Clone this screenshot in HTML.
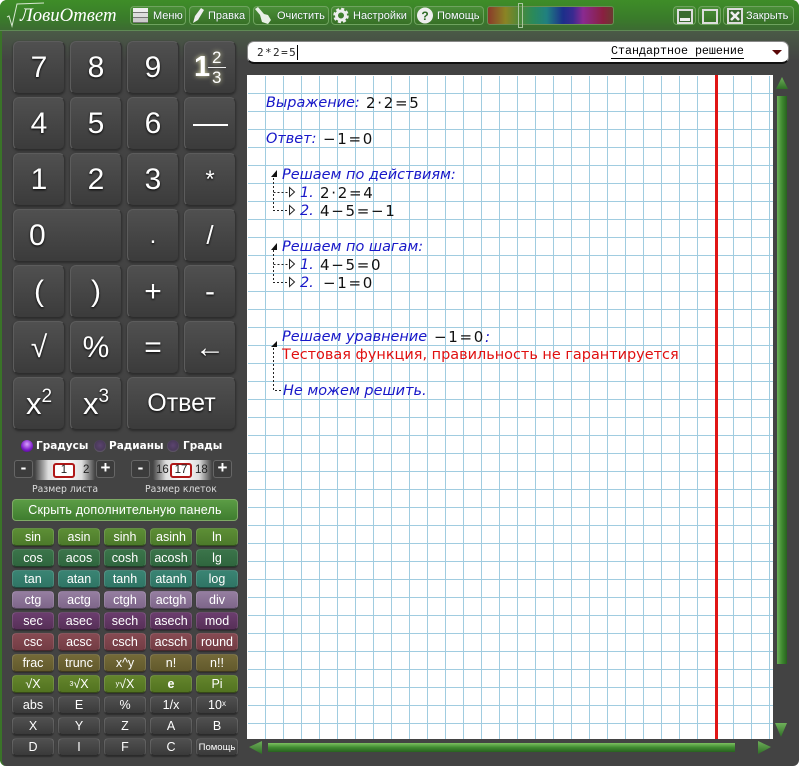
<!DOCTYPE html>
<html><head><meta charset="utf-8"><style>
*{box-sizing:border-box}
html,body{margin:0;padding:0;background:#fff;width:800px;height:767px;overflow:hidden;font-family:"Liberation Sans",sans-serif}
#win{position:absolute;left:0;top:0;width:799px;height:766px;background:#434343;border-radius:7px 7px 6px 6px;border-left:2px solid #3a7428;overflow:hidden}
#wrap{position:absolute;left:0;top:0;width:800px;height:767px}
.a{position:absolute}
#top{position:absolute;left:0;top:0;width:799px;height:31px;background:linear-gradient(#3e8d28,#3a7c2a 60%,#3c6b32);border-bottom:1px solid #5f8a55;border-radius:7px 7px 0 0}
#shade{position:absolute;left:2px;top:31px;width:797px;height:30px;background:linear-gradient(#4a5a46,#434343)}
.tb{position:absolute;top:6px;height:19px;border:1px solid #6fa35f;border-radius:4px;background:linear-gradient(#4a8f38,#377026);color:#fff;font-size:11px;line-height:18px;white-space:nowrap;text-shadow:0 0 1px #143}
.tb span{position:absolute;top:0}
.k{position:absolute;width:52px;height:53px;background:linear-gradient(#505050,#3b3b3b);border:1px solid #5c5c5c;border-bottom-color:#2d2d2d;border-right-color:#333;border-radius:6px;box-shadow:0 1px 2px #2a2a2a;color:#fff;text-align:center;font-size:30px;line-height:51px;text-shadow:0 1px 2px #000}
.s{position:absolute;width:42px;height:18px;border-radius:4px;color:#fff;text-align:center;font-size:12.5px;line-height:17px;border:1px solid rgba(255,255,255,.13);border-bottom-color:rgba(0,0,0,.45);box-shadow:0 1px 1px #2d2d2d}
.g1{background:linear-gradient(#5d8e35,#4c7a2b)}.g2{background:linear-gradient(#3b744a,#2f663e)}.g3{background:linear-gradient(#3a8473,#2f7565)}.g4{background:linear-gradient(#957ea0,#7e668a)}.g5{background:linear-gradient(#6b3d6e,#573058)}.g6{background:linear-gradient(#864a52,#733c44)}.g7{background:linear-gradient(#746a38,#62592c)}.g8{background:linear-gradient(#64852c,#527320)}.g9{background:linear-gradient(#505050,#3a3a3a)}
.r1{top:528px}.r2{top:549px}.r3{top:570px}.r4{top:591px}.r5{top:612px}.r6{top:633px}.r7{top:654px}.r8{top:675px}.r9{top:696px}.r10{top:717px}.r11{top:738px}
.c1{left:12px}.c2{left:58px}.c3{left:104px}.c4{left:150px}.c5{left:196px}
.q{position:absolute;width:19px;height:18px;background:#3c3c3c;border:1px solid #666;border-radius:3px;color:#fff;font-weight:bold;font-size:17px;line-height:14px;text-align:center}
.lab{position:absolute;color:#ddd;font-size:9.3px;white-space:nowrap;font-family:"DejaVu Sans",sans-serif}
.t{position:absolute;white-space:nowrap;font-family:"DejaVu Sans",sans-serif;font-size:14.45px;line-height:18px;color:#1717c8;font-style:italic}
.m{position:absolute;white-space:nowrap;font-family:"DejaVu Sans",sans-serif;font-size:15px;line-height:18px;color:#111;font-weight:normal;font-style:normal;letter-spacing:1.7px}
.rad{position:absolute;width:12px;height:12px;border-radius:50%;top:440px;background:radial-gradient(circle at 50% 45%,#5c4470,#4a3a5a 55%,#7a7a7a 90%)}
.dl{position:absolute;color:#fff;font-weight:bold;font-size:10.5px;top:440px;white-space:nowrap;font-family:"DejaVu Sans",sans-serif}
svg{position:absolute;left:0;top:0}
</style></head><body>
<div id="wrap">
<div id="win"></div>
<div id="top"></div>
<div id="shade"></div>
<div class="a" style="left:0;top:31px;width:2px;height:730px;background:#3a7428"></div>

<div class="a" style="left:20px;top:4px;color:#fff;font-family:'Liberation Serif',serif;font-style:italic;font-size:18.8px;line-height:24px;white-space:nowrap">ЛовиОтвет</div>

<div class="tb" style="left:130px;width:56px"><span style="left:22px">Меню</span></div>
<div class="tb" style="left:189px;width:61px"><span style="left:18px">Правка</span></div>
<div class="tb" style="left:253px;width:76px"><span style="left:23px">Очистить</span></div>
<div class="tb" style="left:331px;width:81px"><span style="left:21px">Настройки</span></div>
<div class="tb" style="left:414px;width:70px"><span style="left:22px">Помощь</span></div>
<div class="a" style="left:487px;top:6px;width:127px;height:19px;border-radius:3px;border:1px solid #6a8f55;background:linear-gradient(90deg,#8a3a2a 0%,#8a8424 14%,#4a8a3a 26%,#2a8a5a 36%,#208080 47%,#1c2f8a 60%,#3a2a90 68%,#8a2a90 76%,#8a2040 92%,#6a3a30 100%)"></div>
<div class="a" style="left:518px;top:3px;width:5px;height:25px;border:1px solid #a9c69f"></div>
<div class="tb" style="left:673px;width:23px"></div>
<div class="tb" style="left:698px;width:23px"></div>
<div class="tb" style="left:723px;width:71px"><span style="left:22px">Закрыть</span></div>

<svg width="800" height="767">
<path d="M7 17 L9 16 L12 26 L17 4 L44 3" fill="none" stroke="#d7e8d0" stroke-width="1"/>
<rect x="133" y="8" width="15" height="15" fill="#777"/><rect x="133" y="8" width="15" height="4" fill="#eee"/><rect x="133" y="13" width="15" height="4" fill="#ddd"/><rect x="133" y="18" width="15" height="4" fill="#ccc"/>
<path d="M193 23 L195 16 L201 8 L204 10 L198 20 Z" fill="#eee"/>
<path d="M255 9 L258 7 L264 14 L268 15 L271 20 L268 24 L262 22 L260 15 Z" fill="#e8efe6"/>
<circle cx="341" cy="15.5" r="4.5" fill="none" stroke="#eee" stroke-width="3"/><circle cx="341" cy="15.5" r="6.5" fill="none" stroke="#eee" stroke-width="2.5" stroke-dasharray="3 2.1"/>
<circle cx="425" cy="15.5" r="8" fill="#eee"/><text x="425" y="20" text-anchor="middle" font-family="Liberation Sans" font-weight="bold" font-size="12" fill="#2d6a25">?</text>
<rect x="678" y="10" width="14" height="13" fill="#3a6a30" stroke="#ddd" stroke-width="2"/><rect x="680" y="18" width="10" height="3" fill="#eee"/>
<rect x="703" y="10" width="14" height="13" fill="none" stroke="#ddd" stroke-width="2"/>
<rect x="728" y="9" width="14" height="14" fill="#3a6a30" stroke="#ddd" stroke-width="2"/><path d="M731 12 L739 20 M739 12 L731 20" stroke="#eee" stroke-width="2.5"/>
</svg>

<div class="k" style="left:13px;top:41px">7</div><div class="k" style="left:70px;top:41px">8</div><div class="k" style="left:127px;top:41px">9</div>
<div class="k" style="left:184px;top:41px;text-shadow:0 0 5px #e8e8b0"><span class="a" style="left:9px;top:0;font-weight:bold;font-size:29px">1</span><span class="a" style="left:27px;top:-10px;font-size:17px">2</span><span class="a" style="left:27px;top:10px;font-size:17px">3</span><span class="a" style="left:23px;top:25px;width:18px;height:1px;background:#eee"></span></div>
<div class="k" style="left:13px;top:97px">4</div><div class="k" style="left:70px;top:97px">5</div><div class="k" style="left:127px;top:97px">6</div>
<div class="k" style="left:184px;top:97px"><span class="a" style="left:8px;top:26px;width:35px;height:2px;background:#fff"></span></div>
<div class="k" style="left:13px;top:153px">1</div><div class="k" style="left:70px;top:153px">2</div><div class="k" style="left:127px;top:153px">3</div><div class="k" style="left:184px;top:153px;font-size:24px">*</div>
<div class="k" style="left:13px;top:209px;width:109px;text-align:left;padding-left:15px">0</div><div class="k" style="left:127px;top:209px;font-size:24px">.</div><div class="k" style="left:184px;top:209px;font-size:26px">/</div>
<div class="k" style="left:13px;top:265px">(</div><div class="k" style="left:70px;top:265px">)</div><div class="k" style="left:127px;top:265px">+</div><div class="k" style="left:184px;top:265px">-</div>
<div class="k" style="left:13px;top:321px">√</div><div class="k" style="left:70px;top:321px">%</div><div class="k" style="left:127px;top:321px">=</div><div class="k" style="left:184px;top:321px">←</div>
<div class="k" style="left:13px;top:377px;font-size:31px">x<sup style="font-size:19px;position:relative;line-height:0;vertical-align:baseline;top:-12px">2</sup></div>
<div class="k" style="left:70px;top:377px;font-size:31px">x<sup style="font-size:19px;position:relative;line-height:0;vertical-align:baseline;top:-12px">3</sup></div>
<div class="k" style="left:127px;top:377px;width:109px;font-size:25px">Ответ</div>

<div class="rad" style="left:21px;background:radial-gradient(circle at 50% 35%,#d9a0ff,#7a18c8 60%,#3a1060)"></div><div class="dl" style="left:36px">Градусы</div>
<div class="rad" style="left:94px"></div><div class="dl" style="left:109px">Радианы</div>
<div class="rad" style="left:167px"></div><div class="dl" style="left:183px">Грады</div>

<div class="q" style="left:14px;top:460px">-</div>
<div class="a" style="left:35px;top:460px;width:60px;height:20px;background:linear-gradient(90deg,#444,#ddd 22%,#fff 50%,#ddd 78%,#444);border-radius:2px"></div>
<div class="a" style="left:53px;top:463px;width:22px;height:15px;background:#fff;border:2px solid #b01818;border-radius:3px;color:#222;font-size:11.5px;line-height:11px;text-align:center">1</div>
<div class="a" style="left:83px;top:464px;color:#222;font-size:11.5px">2</div>
<div class="q" style="left:96px;top:460px">+</div>
<div class="lab" style="left:32px;top:484px">Размер листа</div>

<div class="q" style="left:131px;top:460px">-</div>
<div class="a" style="left:153px;top:460px;width:59px;height:20px;background:linear-gradient(90deg,#444,#ddd 22%,#fff 50%,#ddd 78%,#444);border-radius:2px"></div>
<div class="a" style="left:156px;top:464px;color:#222;font-size:11.5px">16</div>
<div class="a" style="left:170px;top:463px;width:22px;height:15px;background:#fff;border:2px solid #b01818;border-radius:3px;color:#222;font-size:11.5px;line-height:11px;text-align:center">17</div>
<div class="a" style="left:195px;top:464px;color:#222;font-size:11.5px">18</div>
<div class="q" style="left:213px;top:460px">+</div>
<div class="lab" style="left:145px;top:484px">Размер клеток</div>

<div class="a" style="left:12px;top:499px;width:226px;height:22px;border-radius:4px;border:1px solid #7eaa66;background:linear-gradient(#5b9c45,#3f7d2f);color:#fff;font-size:12.5px;line-height:20px;text-align:center;letter-spacing:.2px">Скрыть дополнительную панель</div>

<div class="s g1 r1 c1">sin</div><div class="s g1 r1 c2">asin</div><div class="s g1 r1 c3">sinh</div><div class="s g1 r1 c4">asinh</div><div class="s g1 r1 c5">ln</div>
<div class="s g2 r2 c1">cos</div><div class="s g2 r2 c2">acos</div><div class="s g2 r2 c3">cosh</div><div class="s g2 r2 c4">acosh</div><div class="s g2 r2 c5">lg</div>
<div class="s g3 r3 c1">tan</div><div class="s g3 r3 c2">atan</div><div class="s g3 r3 c3">tanh</div><div class="s g3 r3 c4">atanh</div><div class="s g3 r3 c5">log</div>
<div class="s g4 r4 c1">ctg</div><div class="s g4 r4 c2">actg</div><div class="s g4 r4 c3">ctgh</div><div class="s g4 r4 c4">actgh</div><div class="s g4 r4 c5">div</div>
<div class="s g5 r5 c1">sec</div><div class="s g5 r5 c2">asec</div><div class="s g5 r5 c3">sech</div><div class="s g5 r5 c4">asech</div><div class="s g5 r5 c5">mod</div>
<div class="s g6 r6 c1">csc</div><div class="s g6 r6 c2">acsc</div><div class="s g6 r6 c3">csch</div><div class="s g6 r6 c4">acsch</div><div class="s g6 r6 c5">round</div>
<div class="s g7 r7 c1">frac</div><div class="s g7 r7 c2">trunc</div><div class="s g7 r7 c3">x^y</div><div class="s g7 r7 c4">n!</div><div class="s g7 r7 c5">n!!</div>
<div class="s g8 r8 c1">√X</div><div class="s g8 r8 c2"><span style="font-size:7px;position:relative;top:-2px">3</span>√X</div><div class="s g8 r8 c3"><span style="font-size:7px;position:relative;top:-2px">y</span>√X</div><div class="s g8 r8 c4" style="font-weight:bold">e</div><div class="s g8 r8 c5">Pi</div>
<div class="s g9 r9 c1">abs</div><div class="s g9 r9 c2">E</div><div class="s g9 r9 c3">%</div><div class="s g9 r9 c4">1/x</div><div class="s g9 r9 c5">10<span style="font-size:8px;position:relative;top:-3px">x</span></div>
<div class="s g9 r10 c1">X</div><div class="s g9 r10 c2">Y</div><div class="s g9 r10 c3">Z</div><div class="s g9 r10 c4">A</div><div class="s g9 r10 c5">B</div>
<div class="s g9 r11 c1">D</div><div class="s g9 r11 c2">I</div><div class="s g9 r11 c3">F</div><div class="s g9 r11 c4">C</div><div class="s g9 r11 c5" style="font-size:9.5px">Помощь</div>

<div class="a" style="left:247px;top:41px;width:542px;height:23px;background:#fff;border-radius:7px;border:1px solid #888;border-bottom:2px solid #111"></div>
<div class="a" style="left:257px;top:45px;font-family:'DejaVu Sans Mono',monospace;font-size:11px;letter-spacing:1.4px;line-height:15px;color:#222">2*2=5</div>
<div class="a" style="left:297px;top:45px;width:1px;height:15px;background:#000"></div>
<div class="a" style="left:611px;top:45px;font-family:'Liberation Mono',monospace;font-size:11.67px;line-height:13px;color:#000;border-bottom:1px solid #000;white-space:nowrap">Стандартное решение</div>
<div class="a" style="left:772px;top:50px;width:0;height:0;border-left:5px solid transparent;border-right:5px solid transparent;border-top:5px solid #5a0808"></div>

<div class="a" style="left:247px;top:75px;width:526px;height:664px;background-color:#fff;background-image:linear-gradient(90deg,transparent 17px,#a0cce0 17px),linear-gradient(transparent 17px,#a0cce0 17px);background-size:18px 18px;background-origin:padding-box;background-clip:padding-box;border-left:1px solid #fff;border-top:1px solid #fff"></div>
<div class="a" style="left:715px;top:75px;width:3px;height:664px;background:#e01515"></div>

<svg width="800" height="767">
<defs>
<linearGradient id="ga" x1="0" y1="0" x2="0" y2="1"><stop offset="0" stop-color="#6fb05a"/><stop offset="1" stop-color="#2f6f26"/></linearGradient>
</defs>
<path d="M782 77 L776 89 L788 89 Z" fill="url(#ga)"/>
<path d="M775 723 L787 723 L781 737 Z" fill="url(#ga)"/>
<path d="M249 747 L262 741 L262 754 Z" fill="url(#ga)"/>
<path d="M758 741 L771 747 L758 754 Z" fill="url(#ga)"/>
<g fill="none" stroke="#222" stroke-dasharray="2 2">
<path d="M273.5 178 V210.5 H288"/><path d="M273.5 192.5 H288"/>
<path d="M273.5 250 V282.5 H288"/><path d="M273.5 264.5 H288"/>
<path d="M273.5 348 V390.5 H283"/>
</g>
<g fill="#111"><path d="M271 177 L277 170 V177 Z"/><path d="M271 250 L277 243 V250 Z"/><path d="M271 347 L277 341 V347 Z"/></g>
<g fill="#fff" stroke="#222"><path d="M289.5 187.5 L294.5 192 L289.5 196.5 Z"/><path d="M289.5 205.5 L294.5 210 L289.5 214.5 Z"/><path d="M289.5 259.5 L294.5 264 L289.5 268.5 Z"/><path d="M289.5 277.5 L294.5 282 L289.5 286.5 Z"/></g>
</svg>
<div class="a" style="left:777px;top:96px;width:10px;height:568px;background:linear-gradient(90deg,#6fb05a,#3f8a30 50%,#28621f);"></div>
<div class="a" style="left:268px;top:743px;width:467px;height:9px;background:linear-gradient(#7cc060,#3f8a30 50%,#28621f)"></div>

<div class="t" style="left:266px;top:94px">Выражение:</div><div class="m" style="left:366px;top:94px">2·2=5</div>
<div class="t" style="left:266px;top:130px">Ответ:</div><div class="m" style="left:323px;top:130px">−1=0</div>
<div class="t" style="left:282px;top:166px">Решаем по действиям:</div>
<div class="t" style="left:300px;top:184px">1.</div><div class="m" style="left:320px;top:184px">2·2=4</div>
<div class="t" style="left:300px;top:202px">2.</div><div class="m" style="left:320px;top:202px">4−5=−1</div>
<div class="t" style="left:282px;top:238px">Решаем по шагам:</div>
<div class="t" style="left:300px;top:256px">1.</div><div class="m" style="left:320px;top:256px">4−5=0</div>
<div class="t" style="left:300px;top:274px">2.</div><div class="m" style="left:323px;top:274px">−1=0</div>
<div class="t" style="left:282px;top:328px">Решаем уравнение</div><div class="m" style="left:434px;top:328px">−1=0<span style="color:#1717c8;font-style:italic">:</span></div>
<div class="t" style="left:282px;top:346px;color:#e01010;font-style:normal">Тестовая функция, правильность не гарантируется</div>
<div class="t" style="left:283px;top:382px">Не можем решить.</div>
</div>
</body></html>
